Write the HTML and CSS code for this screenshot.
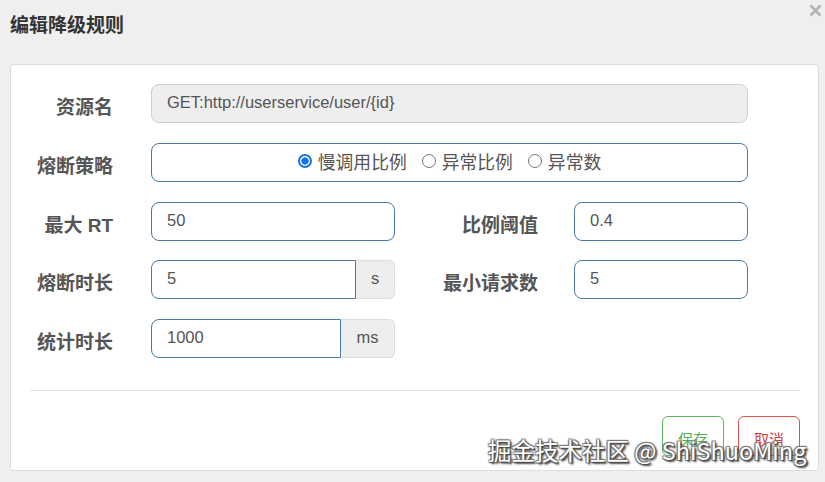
FILE: index.html
```html
<!DOCTYPE html>
<html lang="zh-CN">
<head>
<meta charset="utf-8">
<title>编辑降级规则</title>
<link rel="stylesheet" href="styles.css">
</head>
<body>
<div class="dialog">
  <div class="dialog-head">
    <h1 class="dialog-title">编辑降级规则</h1>
    <span class="close-btn" aria-label="close">
      <svg width="13" height="13" viewBox="0 0 13 13"><path d="M1.5 1.5 L11.5 11.5 M11.5 1.5 L1.5 11.5" stroke="#b4b4b4" stroke-width="2.6" stroke-linecap="butt"/></svg>
    </span>
  </div>
  <div class="card">
    <div class="form-grid">
      <label class="lbl">资源名</label>
      <div class="field span3 readonly">GET:http://userservice/user/{id}</div>

      <label class="lbl">熔断策略</label>
      <div class="field span3 radio-box">
        <span class="radio-opt"><span class="radio checked"></span>慢调用比例</span>
        <span class="radio-opt"><span class="radio"></span>异常比例</span>
        <span class="radio-opt"><span class="radio"></span>异常数</span>
      </div>

      <label class="lbl">最大 RT</label>
      <div class="field">50</div>
      <label class="lbl lbl2">比例阈值</label>
      <div class="field">0.4</div>

      <label class="lbl">熔断时长</label>
      <div class="group">
        <div class="field grouped">5</div>
        <div class="addon addon-s">s</div>
      </div>
      <label class="lbl lbl2">最小请求数</label>
      <div class="field">5</div>

      <label class="lbl">统计时长</label>
      <div class="group">
        <div class="field grouped">1000</div>
        <div class="addon addon-ms">ms</div>
      </div>
    </div>
    <div class="divider"></div>
    <div class="actions">
      <button class="btn btn-save">保存</button>
      <button class="btn btn-cancel">取消</button>
    </div>
    <div class="watermark">掘金技术社区 @ ShiShuoMing</div>
  </div>
</div>
</body>
</html>
```

FILE: styles.css
```css
html, body {
  margin: 0;
  padding: 0;
  background: #efefef;
  font-family: "Liberation Sans", Arial, "Noto Sans CJK SC", sans-serif;
  color: #555;
}
.dialog {
  width: 825px;
  height: 482px;
  box-sizing: border-box;
  position: relative;
}
.dialog-head {
  height: 64px;
  position: relative;
}
.dialog-title {
  margin: 0;
  padding: 11px 0 0 10px;
  font-size: 19px;
  font-weight: bold;
  color: #333;
  font-family: "Noto Sans CJK SC", sans-serif;
  line-height: 26px;
}
.close-btn {
  position: absolute;
  left: 809px;
  top: 4px;
  width: 13px;
  height: 13px;
}
.close-btn svg { display: block; }
.card {
  position: relative;
  margin: 0 6px 0 10px;
  height: 407px;
  background: #fff;
  border: 1px solid #dcdcdc;
  border-radius: 4px;
  box-sizing: border-box;
}
.form-grid {
  display: grid;
  grid-template-columns: 140px 244px 179px 174px;
  grid-auto-rows: 39px;
  row-gap: 19.75px;
  padding-top: 19px;
}
.lbl {
  font-family: "Liberation Sans", Arial, "Noto Sans CJK SC", sans-serif;
  font-weight: bold;
  font-size: 19px;
  color: #555;
  text-align: right;
  padding-right: 38px;
  display: flex;
  align-items: center;
  justify-content: flex-end;
  padding-top: 4px;
  box-sizing: border-box;
}
.lbl2 { padding-right: 36px; }
.field {
  box-sizing: border-box;
  border: 1px solid #4a79a7;
  border-radius: 8px;
  display: flex;
  align-items: center;
  padding: 0 0 2px 15px;
  font-size: 16.5px;
  color: #555;
  background: #fff;
}
.span3 { grid-column: 2 / 5; }
.readonly {
  background: #eeeeee;
  border-color: #cfcfcf;
}
.radio-box {
  justify-content: center;
  padding-left: 0;
  font-family: "Noto Sans CJK SC", sans-serif;
  font-size: 17.8px;
  gap: 15px;
}
.radio-opt {
  display: inline-flex;
  align-items: center;
  color: #555;
}
.radio {
  width: 14px;
  height: 14px;
  box-sizing: border-box;
  border: 1px solid #767676;
  border-radius: 50%;
  margin-right: 6px;
  background: #fff;
}
.radio.checked {
  border: 2px solid #1a73e8;
  background: radial-gradient(circle, #1a73e8 0 3.4px, #fff 3.9px);
}
.group {
  display: flex;
}
.grouped {
  flex: 1;
  border-radius: 8px 0 0 8px;
}
.addon {
  box-sizing: border-box;
  background: #eeeeee;
  border: 1px solid #dddddd;
  border-left: none;
  border-radius: 0 6px 6px 0;
  display: flex;
  align-items: center;
  justify-content: center;
  font-size: 16.5px;
  color: #555;
  padding-bottom: 3px;
}
.addon-s { width: 39px; }
.addon-ms { width: 54px; }
.divider {
  margin: 32px 18px 0 19px;
  border-top: 1px solid #e3e3e3;
}
.actions {
  display: flex;
  justify-content: flex-end;
  gap: 14px;
  margin: 25px 18px 0 0;
}
.btn {
  width: 62px;
  height: 40px;
  background: #fff;
  border-radius: 6px;
  font-family: "Noto Sans CJK SC", sans-serif;
  font-size: 15px;
  padding: 0;
  padding-top: 4px;
}
.btn-save {
  border: 1px solid #5cb85c;
  color: #4cae4c;
}
.btn-cancel {
  border: 1px solid #d9534f;
  color: #d43f3a;
}
.watermark {
  position: absolute;
  left: 477px;
  top: 368px;
  font-family: "Noto Sans CJK SC", sans-serif;
  font-size: 23.5px;
  color: #fff;
  white-space: nowrap;
  text-shadow: 1px 1px 1px #444, -1px -1px 1px #777, 1px -1px 1px #777, -1px 1px 1px #777, 2px 2px 2px #333;
}
```
